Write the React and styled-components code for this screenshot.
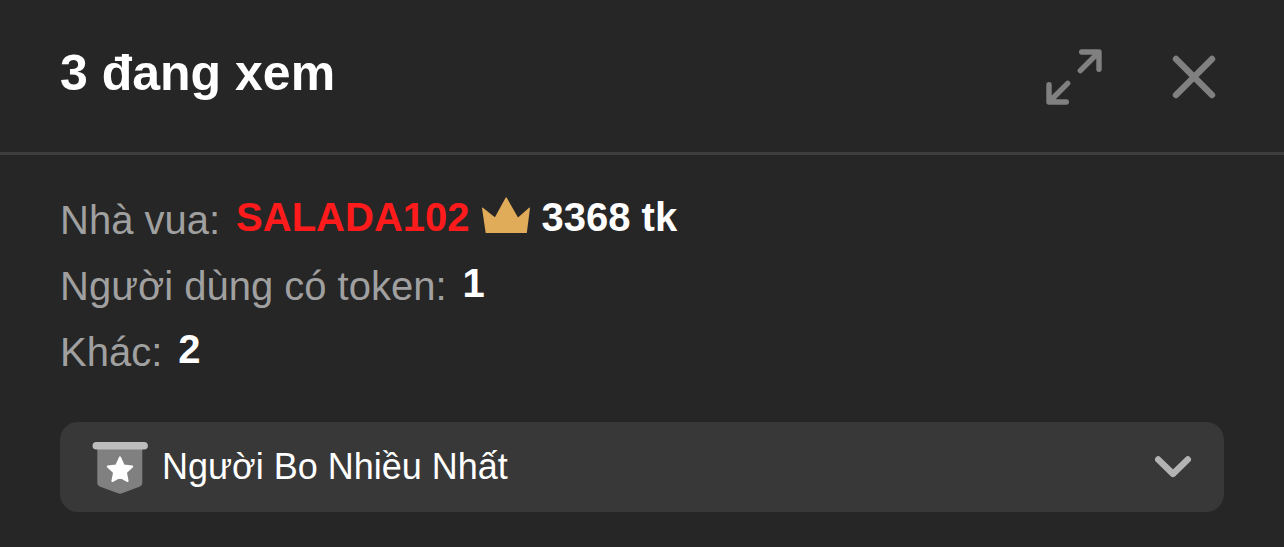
import React, { useState } from "react";
import styled, { createGlobalStyle } from "styled-components";

const App = () => {
  const [open, setOpen] = useState(false);

  return (
    <Panel>
      <GlobalStyle />
      <Header>
        <Title>3 đang xem</Title>
        <Actions>
          <IconButton type="button" aria-label="Mở rộng">
            <ExpandIcon />
          </IconButton>
          <IconButton type="button" aria-label="Đóng">
            <CloseIcon />
          </IconButton>
        </Actions>
      </Header>
      <Content>
        <Stats>
          <Row>
            <Label>Nhà vua:</Label>
            <Value>
              <King href="#salada102">SALADA102</King>
              <CrownIcon />
              3368 tk
            </Value>
          </Row>
          <Row>
            <Label>Người dùng có token:</Label>
            <Value>1</Value>
          </Row>
          <Row>
            <Label>Khác:</Label>
            <Value>2</Value>
          </Row>
        </Stats>
        <TopTippers
          type="button"
          aria-expanded={open}
          onClick={() => setOpen(!open)}
        >
          <BadgeIcon />
          <TopTippersText>Người Bo Nhiều Nhất</TopTippersText>
          <ChevronIcon />
        </TopTippers>
      </Content>
    </Panel>
  );
};

const ExpandIcon = () => (
  <svg width="56" height="56" viewBox="0 0 56 56" aria-hidden="true">
    <g
      fill="none"
      stroke="#808080"
      strokeWidth="5.4"
      strokeLinecap="round"
      strokeLinejoin="round"
    >
      <path d="M35.7 3H53V20.3M34.3 21.7L52 4" />
      <path d="M3 35.7V53H20.3M21.7 34.3L4 52" />
    </g>
  </svg>
);

const CloseIcon = () => (
  <svg width="44" height="44" viewBox="0 0 44 44" aria-hidden="true">
    <path
      d="M4 4L40 40M40 4L4 40"
      fill="none"
      stroke="#808080"
      strokeWidth="6.4"
      strokeLinecap="round"
    />
  </svg>
);

const CrownIcon = () => (
  <svg width="48" height="40" viewBox="0 0 48 40" aria-hidden="true">
    <path
      d="M.6 10.5L12.9 20.3L23.6 .8Q24.2 -.2 24.8 .8L36 20.6L47.4 10.5Q48 10.2 48 11L44.8 36H3.7L0 11Q0 10.2 .6 10.5Z"
      fill="#e0ac59"
    />
  </svg>
);

const BadgeIcon = () => (
  <svg width="56" height="54" viewBox="0 -2 56 54" aria-hidden="true">
    <path
      d="M5.3 4H50.3V41Q50.3 43.4 48 44.4L30 51.3Q28 52 26 51.3L7.6 44.4Q5.3 43.4 5.3 41Z"
      fill="#808080"
    />
    <rect x=".5" y="0" width="55.4" height="7.6" rx="3.8" fill="#bdbdbd" />
    <path
      d="M28 15.4L31.7 23.4L40.2 24.5L33.9 30.5L35.6 39L28 34.9L20.4 39L22.1 30.5L15.8 24.5L24.3 23.4Z"
      fill="#fff"
      stroke="#fff"
      strokeWidth="2"
      strokeLinejoin="round"
    />
  </svg>
);

const ChevronIcon = () => (
  <svg width="37" height="24" viewBox="0 0 37 24" aria-hidden="true">
    <path
      d="M3.2 4.5L18 18.9L32.8 4.5"
      fill="none"
      stroke="#b3b3b3"
      strokeWidth="6.4"
      strokeLinecap="round"
      strokeLinejoin="round"
    />
  </svg>
);

const GlobalStyle = createGlobalStyle`
  body {
    margin: 0;
    background: #262626;
  }

  * {
    box-sizing: border-box;
  }
`;

const Panel = styled.section`
  background: #262626;
  color: #fff;
  font-family: "Liberation Sans", Arial, sans-serif;
`;

const Header = styled.header`
  display: flex;
  align-items: center;
  justify-content: space-between;
  padding: 41px 60px 39px;
  border-bottom: 3px solid #3e3e3e;
`;

const Title = styled.h2`
  margin: 0;
  padding-bottom: 8px;
  font-size: 50px;
  line-height: 64px;
`;

const Actions = styled.div`
  display: flex;
  align-items: center;
  gap: 70px;
  margin-right: 8px;
`;

const IconButton = styled.button`
  display: flex;
  padding: 0;
  border: none;
  background: none;
  cursor: pointer;
`;

const Content = styled.div`
  padding: 32px 60px;
`;

const Stats = styled.div`
  margin-bottom: 37px;
`;

const Row = styled.div`
  display: flex;
  align-items: flex-start;
  gap: 16px;
  font-size: 40px;
`;

const Label = styled.span`
  color: #a0a0a0;
  line-height: 66px;
`;

const Value = styled.strong`
  display: flex;
  align-items: center;
  gap: 12px;
  line-height: 60px;
`;

const King = styled.a`
  color: #ff1b1b;
  text-decoration: none;
`;

const TopTippers = styled.button`
  display: flex;
  align-items: center;
  gap: 14px;
  width: 100%;
  padding: 16px 32px;
  border: none;
  border-radius: 18px;
  background: #383838;
  color: #fff;
  font-family: inherit;
  font-size: 36px;
  line-height: 58px;
  text-align: left;
  cursor: pointer;
`;

const TopTippersText = styled.span`
  flex: 1;
`;

export default App;
